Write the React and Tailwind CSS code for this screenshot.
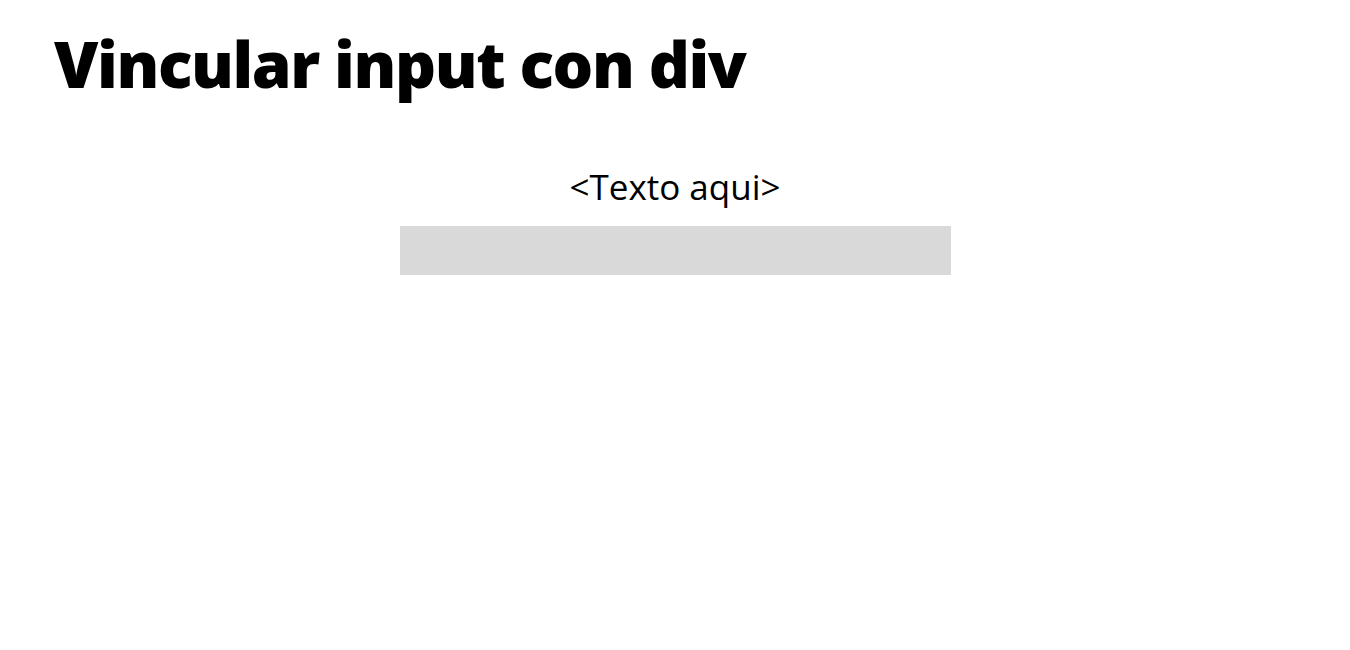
import { useState } from "react";

export default function App() {
  const [texto, setTexto] = useState("");

  return (
    <div className="min-h-screen bg-white text-black" style={{ fontFamily: '"Open Sans", sans-serif' }}>
      <h1 className="pt-[20px] pl-[54px] text-[64px] leading-[87px] font-extrabold tracking-[-1.4px]">Vincular input con div</h1>
      <div className="mt-[56px] flex flex-col items-center">
        <div className="text-[35px] leading-[48px]">{texto || "<Texto aqui>"}</div>
        <input
          value={texto}
          onChange={(e) => setTexto(e.target.value)}
          className="mt-[15px] h-[49px] w-[551px] bg-[#d9d9d9] px-3 text-lg outline-none"
        />
      </div>
    </div>
  );
}
